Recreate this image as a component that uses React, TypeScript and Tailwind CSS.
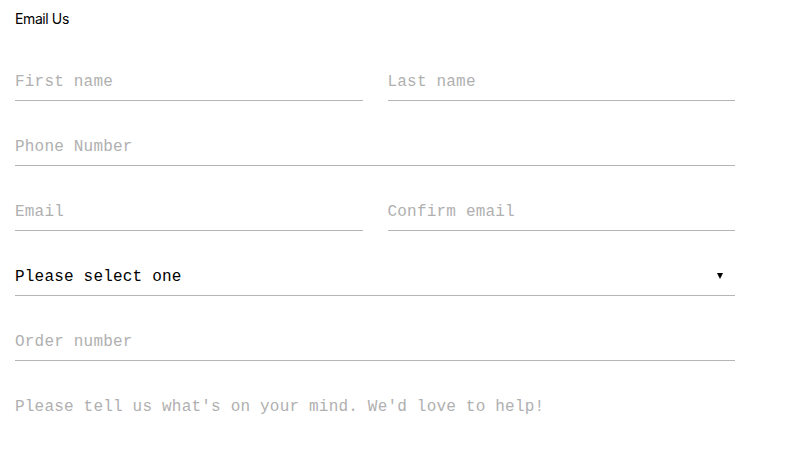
import { useState } from "react";

const mono = "font-['Liberation_Mono','DejaVu_Sans_Mono',monospace] text-[16px] tracking-[0.2px]";

const Field = ({ placeholder, className = "" }: { placeholder: string; className?: string }) => (
  <input
    type="text"
    placeholder={placeholder}
    className={`${mono} h-[40px] w-full border-b border-[#b5b5b5] bg-transparent pt-[2px] text-black outline-none placeholder:text-[#b0b0b0] ${className}`}
  />
);

export default function App() {
  const [topic, setTopic] = useState("");

  return (
    <div className="min-h-[454px] w-[787px] bg-white px-[15px] pt-[10px]">
      <h1 className="font-['Inter',sans-serif] text-[14px] leading-[17px] tracking-[-0.4px] text-black">
        Email Us
      </h1>

      <form className="mt-[34px] flex w-[720px] flex-col gap-[25px]">
        <div className="grid grid-cols-2 gap-[25px]">
          <Field placeholder="First name" />
          <Field placeholder="Last name" />
        </div>

        <Field placeholder="Phone Number" />

        <div className="grid grid-cols-2 gap-[25px]">
          <Field placeholder="Email" />
          <Field placeholder="Confirm email" />
        </div>

        <div className="relative">
          <select
            value={topic}
            onChange={(e) => setTopic(e.target.value)}
            className={`${mono} h-[40px] w-full appearance-none rounded-none border-b border-[#b5b5b5] bg-transparent pt-[2px] text-black outline-none`}
          >
            <option value="">Please select one</option>
            <option value="order">Order question</option>
            <option value="other">Other</option>
          </select>
          <span className="pointer-events-none absolute right-[12px] top-[17px] h-0 w-0 border-x-[3.5px] border-t-[6px] border-x-transparent border-t-black" />
        </div>

        <Field placeholder="Order number" />

        <textarea
          placeholder="Please tell us what's on your mind. We'd love to help!"
          className={`${mono} h-[70px] w-full resize-none bg-transparent pt-[11px] leading-[20px] text-black outline-none placeholder:text-[#b0b0b0]`}
        />
      </form>
    </div>
  );
}
